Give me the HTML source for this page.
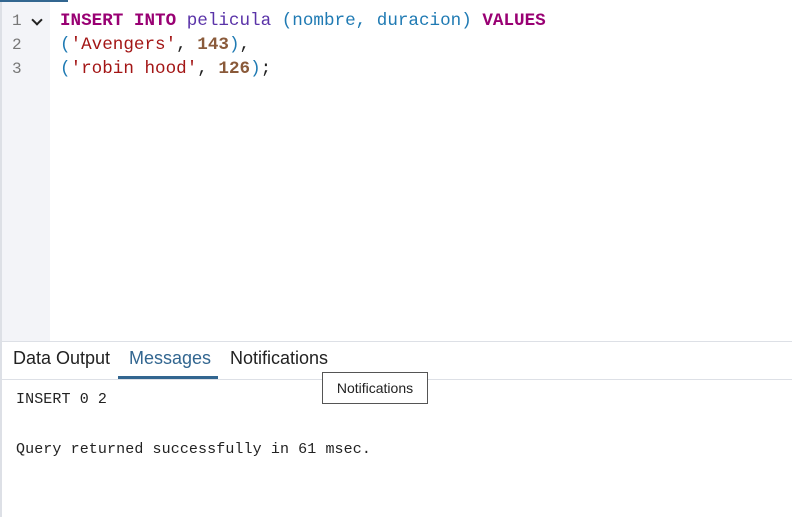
<!DOCTYPE html>
<html><head><style>
body{margin:0;width:792px;height:517px;background:#fff;position:relative;overflow:hidden;font-family:"Liberation Sans",sans-serif}
.top{position:absolute;left:0;top:0;width:68px;height:2px;background:#326690}
.lb{position:absolute;left:0;top:0;width:2px;height:517px;background:#dde0e6}
.gut{position:absolute;left:2px;top:2px;width:48px;height:339px;background:#f3f4f8}
.code{position:absolute;left:60px;top:9px;font-family:"Liberation Mono",monospace;font-size:17.6px;line-height:24px;color:#222;white-space:pre}
.ln{position:absolute;left:12px;top:9px;font-family:"Liberation Mono",monospace;font-size:16px;line-height:24px;color:#777;white-space:pre}
.chev{position:absolute;left:33px;top:16px;width:6px;height:6px;border-right:2px solid #222;border-bottom:2px solid #222;transform:rotate(45deg)}
.k{color:#990073;font-weight:bold}.i{color:#5a33a8}.p{color:#1f7ab3}.s{color:#a31515}.n{color:#8a5a3a;font-weight:bold}
.bar{position:absolute;left:2px;top:341px;width:790px;height:37px;border-top:1px solid #dde0e6;border-bottom:1px solid #dde0e6}
.tab{position:absolute;top:348px;font-size:18px;color:#222}
.ul{position:absolute;left:118px;top:376px;width:100px;height:3px;background:#326690}
.tip{position:absolute;left:322px;top:372px;width:106px;height:32px;border:1px solid #555;background:#fff;font-size:14px;color:#222;line-height:30px;text-align:center;box-sizing:border-box}
.msg{position:absolute;left:16px;font-family:"Liberation Mono",monospace;font-size:15px;letter-spacing:0.1px;color:#222}
</style></head><body>
<div class="lb"></div><div class="top"></div><div class="gut"></div>
<div class="ln">1
2
3</div>
<div class="chev"></div>
<div class="code"><span class="k">INSERT INTO</span> <span class="i">pelicula</span> <span class="p">(nombre, duracion)</span> <span class="k">VALUES</span>
<span class="p">(</span><span class="s">'Avengers'</span>, <span class="n">143</span><span class="p">)</span>,
<span class="p">(</span><span class="s">'robin hood'</span>, <span class="n">126</span><span class="p">)</span>;</div>
<div class="bar"></div>
<div class="tab" style="left:13px">Data Output</div>
<div class="tab" style="left:129px;color:#326690">Messages</div>
<div class="tab" style="left:230px">Notifications</div>
<div class="ul"></div>
<div class="tip">Notifications</div>
<div class="msg" style="top:391px">INSERT 0 2</div>
<div class="msg" style="top:441px">Query returned successfully in 61 msec.</div>
</body></html>
